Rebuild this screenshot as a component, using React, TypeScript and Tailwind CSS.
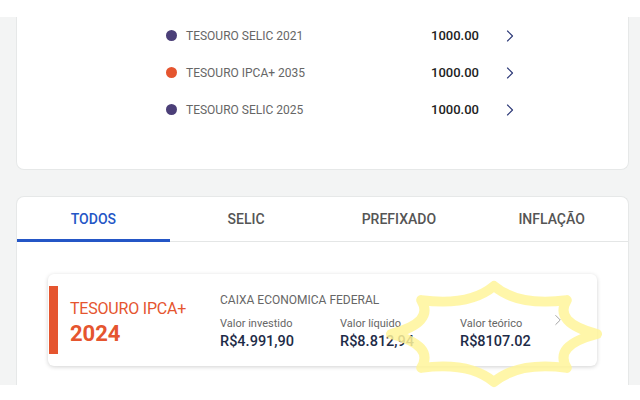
import { ChevronRight } from "lucide-react";

const titulos = [
  { nome: "TESOURO SELIC 2021", cor: "bg-[#4b3f78]", valor: "1000.00" },
  { nome: "TESOURO IPCA+ 2035", cor: "bg-[#e5552f]", valor: "1000.00" },
  { nome: "TESOURO SELIC 2025", cor: "bg-[#4b3f78]", valor: "1000.00" },
];

const abas = ["TODOS", "SELIC", "PREFIXADO", "INFLAÇÃO"];

function starPath() {
  const cx = 494;
  const cy = 334;
  const rx = 103;
  const ry = 48;
  const n = 8;
  let d = "";
  for (let i = 0; i < n; i++) {
    const a = (Math.PI * 2 * i) / n - Math.PI / 2;
    const b = (Math.PI * 2 * (i + 1)) / n - Math.PI / 2;
    const m = (a + b) / 2;
    const x1 = cx + rx * Math.cos(a);
    const y1 = cy + ry * Math.sin(a);
    const x2 = cx + rx * Math.cos(b);
    const y2 = cy + ry * Math.sin(b);
    const qx = cx + rx * 0.62 * Math.cos(m);
    const qy = cy + ry * 0.62 * Math.sin(m);
    if (i === 0) d += `M${x1.toFixed(1)} ${y1.toFixed(1)} `;
    d += `Q${qx.toFixed(1)} ${qy.toFixed(1)} ${x2.toFixed(1)} ${y2.toFixed(1)} `;
  }
  return d + "Z";
}

export default function App() {
  return (
    <div
      className="relative w-[640px] h-[400px] bg-white overflow-hidden"
      style={{ fontFamily: "Roboto, 'Noto Sans', sans-serif" }}
    >
      <div className="h-[17px] bg-white" />

      <div className="h-[368px] bg-[#f3f4f4] pl-4 pr-[11px] flex flex-col">
        {/* Lista de títulos */}
        <div className="h-[153px] bg-white rounded-b-lg border-x border-b border-[#e6e8e8]">
          {titulos.map((t) => (
            <div key={t.nome} className="h-[37px] flex items-center pl-[149px]">
              <span className={`w-[11px] h-[11px] rounded-full ${t.cor}`} />
              <span className="ml-[9px] w-[190px] text-[12px] text-[#666] whitespace-nowrap">
                {t.nome}
              </span>
              <span className="w-[103px] text-right text-[13px] font-medium text-[#222]">
                {t.valor}
              </span>
              <ChevronRight
                className="ml-[21px] text-[#2d3a78]"
                size={20}
                strokeWidth={1.4}
              />
            </div>
          ))}
        </div>

        {/* Abas */}
        <div className="mt-[26px] flex-1 bg-white rounded-t-lg border-x border-t border-[#e6e8e8]">
          <div className="grid grid-cols-4 h-[45px] border-b border-[#e4e6e6]">
            {abas.map((a, i) => (
              <div
                key={a}
                className={
                  i === 0
                    ? "flex items-center justify-center text-[14px] font-medium text-[#2456c6] border-b-[3px] border-[#2456c6] pt-[3px] -mb-px"
                    : "flex items-center justify-center text-[14px] font-medium text-[#555]"
                }
              >
                {a}
              </div>
            ))}
          </div>

          <div className="px-[31px] pt-[32px]">
            <div className="h-[92px] rounded-md bg-white shadow-[0_1px_4px_rgba(0,0,0,0.18)] flex items-center">
              <div className="w-[9px] h-[68px] bg-[#e5552f] ml-px" />
              <div className="w-[162px] pl-[12px] pt-[5px] text-[#e5552f] whitespace-nowrap">
                <div className="text-[16px] leading-[22px] tracking-[-0.2px]">TESOURO IPCA+</div>
                <div className="text-[22px] leading-[28px] font-bold">2024</div>
              </div>
              <div className="flex-1 pt-[3px]">
                <div className="text-[12px] text-[#666] leading-[18px]">
                  CAIXA ECONOMICA FEDERAL
                </div>
                <div className="grid grid-cols-[120px_120px_1fr] mt-[7px]">
                  {[
                    ["Valor investido", "R$4.991,90"],
                    ["Valor líquido", "R$8.812,94"],
                    ["Valor teórico", "R$8107.02"],
                  ].map(([l, v]) => (
                    <div key={l}>
                      <div className="text-[11px] text-[#666] leading-[16px]">{l}</div>
                      <div className="text-[14.5px] font-medium text-[#1e2b47] leading-[20px]">
                        {v}
                      </div>
                    </div>
                  ))}
                </div>
              </div>
              <ChevronRight
                className="mr-[30px] text-[#999]"
                size={18}
                strokeWidth={1.2}
              />
            </div>
          </div>
        </div>
      </div>

      {/* destaque desenhado */}
      <svg className="absolute inset-0 pointer-events-none" width={640} height={400}>
        <path
          d={starPath()}
          fill="none"
          stroke="#fff59a"
          strokeOpacity={0.85}
          strokeWidth={10}
          strokeLinejoin="round"
        />
      </svg>
    </div>
  );
}
